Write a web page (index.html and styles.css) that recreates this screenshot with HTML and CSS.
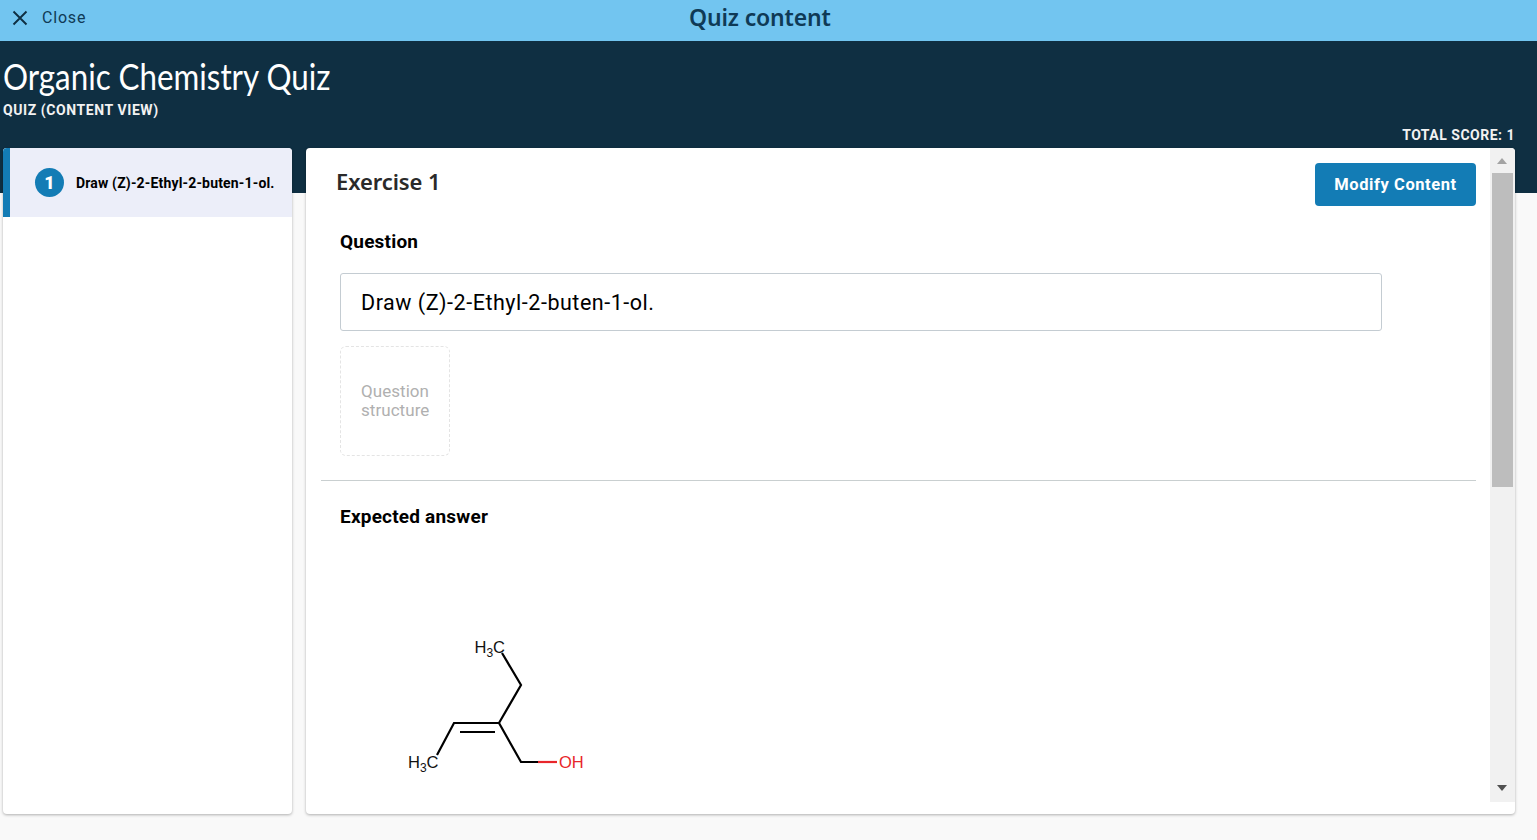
FILE: index.html
```html
<!DOCTYPE html>
<html lang="en">
<head>
<meta charset="utf-8">
<title>Quiz content</title>
<link rel="stylesheet" href="styles.css">
</head>
<body>
<header class="topbar">
  <a class="close">
    <svg class="close-icon" viewBox="0 0 16 16" width="16" height="16"><path d="M1.5 1.5 14.5 14.5M14.5 1.5 1.5 14.5" fill="none" stroke="#0f2f42" stroke-width="1.9"/></svg>
    <span>Close</span>
  </a>
  <div class="topbar-title">Quiz content</div>
</header>
<section class="hero">
  <h1>Organic Chemistry Quiz</h1>
  <div class="subtitle">QUIZ (CONTENT VIEW)</div>
  <div class="score">TOTAL SCORE: 1</div>
</section>
<div class="workspace">
  <aside class="sidebar">
    <div class="item">
      <span class="badge">1</span>
      <span class="item-text">Draw (Z)-2-Ethyl-2-buten-1-ol.</span>
    </div>
  </aside>
  <main class="panel">
    <div class="panel-body">
      <div class="panel-head">
        <h2>Exercise 1</h2>
        <button class="modify">Modify Content</button>
      </div>
      <div class="block">
        <h3>Question</h3>
        <div class="field">Draw (Z)-2-Ethyl-2-buten-1-ol.</div>
        <div class="dropbox">Question structure</div>
      </div>
      <hr class="divider">
      <div class="block">
        <h3 class="answer-title">Expected answer</h3>
        <svg class="molecule" width="280" height="250" viewBox="0 0 280 250">
          <g fill="none" stroke="#000" stroke-width="2.2">
            <path d="M162 113 181 145 159 183 114 183 97 215"/>
            <path d="M120 192H155"/>
            <path d="M159 183 181 222H198"/>
          </g>
          <path d="M198 222H217" fill="none" stroke="#e8262b" stroke-width="2.2"/>
          <text class="atom" x="134.500" y="112.500">H<tspan class="sub" dy="4">3</tspan><tspan dy="-4">C</tspan></text>
          <text class="atom" x="68" y="227.500">H<tspan class="sub" dy="4">3</tspan><tspan dy="-4">C</tspan></text>
          <text class="atom red" x="219" y="227.500">OH</text>
        </svg>
      </div>
    </div>
    <div class="scrollbar">
      <div class="arrow up"></div>
      <div class="track"><div class="thumb"></div></div>
      <div class="arrow down"></div>
    </div>
  </main>
</div>
</body>
</html>
```
FILE: styles.css
```css
* { box-sizing: border-box; }
html, body { margin: 0; height: 840px; overflow: hidden; }
body { background: #f9f9f9; font-family: Roboto, "Liberation Sans", sans-serif; color: #000; }

.topbar { height: 41px; background: #72c5f0; display: flex; align-items: flex-start; position: relative; }
.close { display: flex; align-items: center; gap: 14px; padding: 9px 0 0 12px; font-size: 16px; color: #0f3a56; letter-spacing: .8px; line-height: 17px; }
.close-icon { display: block; }
.topbar-title { position: absolute; left: 689px; top: 3px; font-family: "Noto Sans", sans-serif; font-size: 23px; line-height: 29px; font-weight: 600; color: #0f3a56; letter-spacing: -.15px; }

.hero { height: 152px; background: #0f2f42; color: #fff; padding: 14px 0 0 3px; position: relative; }
.hero h1 { margin: 0; font-family: Lato, sans-serif; font-weight: 400; font-size: 36px; line-height: 43px; transform: scaleX(.87); transform-origin: left center; white-space: nowrap; }
.subtitle { font-size: 14px; font-weight: 700; line-height: 16px; margin-top: 4px; color: #f2f2f2; letter-spacing: .58px; }
.score { position: absolute; right: 22px; top: 86px; font-size: 14px; font-weight: 700; line-height: 16px; color: #f2f2f2; letter-spacing: .5px; }

.workspace { display: flex; gap: 14px; padding: 0 22px 0 3px; margin-top: -45px; height: 666px; position: relative; }
.sidebar { width: 289px; background: #fff; border-radius: 4px; box-shadow: 0 1px 3px rgba(0,0,0,.3); overflow: hidden; }
.item { height: 69px; background: #eceef9; border-left: 7px solid #137cb5; display: flex; align-items: center; padding-left: 25px; }
.badge { width: 29px; height: 29px; border-radius: 50%; background: #137cb5; color: #fff; font-weight: 900; font-size: 18px; display: flex; align-items: center; justify-content: center; flex: none; }
.item-text { margin-left: 12px; font-size: 14px; font-weight: 700; letter-spacing: .17px; white-space: nowrap; }

.panel { flex: 1; background: #fff; border-radius: 4px; box-shadow: 0 1px 3px rgba(0,0,0,.3); display: flex; overflow: hidden; }
.panel-body { flex: 1; padding: 15px 14px 0 15px; min-width: 0; }
.panel-head { display: flex; justify-content: space-between; align-items: flex-start; height: 68px; }
.panel-head h2 { margin: 4px 0 0 15px; font-family: "Noto Sans", sans-serif; font-weight: 600; font-size: 22px; line-height: 28px; letter-spacing: -.1px; color: #2a2a2a; }
.modify { width: 161px; height: 43px; border: 0; border-radius: 4px; background: #137cb5; color: #fff; font-family: Roboto, sans-serif; font-weight: 700; font-size: 16.5px; letter-spacing: .58px; padding: 0; }
.block { padding-left: 19px; }
.block h3 { margin: 0; font-size: 19px; line-height: 22px; font-weight: 700; color: #000; letter-spacing: .2px; }
.field { width: 1042px; height: 58px; margin-top: 20px; border: 1px solid #c4ccd2; border-radius: 3px; padding: 0 20px; font-size: 21.5px; line-height: 57px; color: #000; letter-spacing: .53px; }
.dropbox { width: 110px; height: 110px; margin-top: 15px; border: 1px dashed #e4e4e4; border-radius: 6px; padding: 35px 20px 0; font-size: 17px; line-height: 19px; color: #b0b0b0; letter-spacing: .05px; }
.divider { border: 0; border-top: 1px solid #c9cfd0; margin: 24px 0 25px; }
.molecule { display: block; margin-top: 12px; }
.atom { font-family: "Liberation Sans", sans-serif; font-size: 16.5px; fill: #111; }
.sub { font-size: 12px; }
.red { fill: #e8262b; }

.scrollbar { width: 25px; height: 654px; background: #f1f1f1; padding-right: 2px; display: flex; flex-direction: column; flex: none; }
.arrow { height: 25px; flex: none; position: relative; }
.arrow::after { content: ""; position: absolute; left: 7px; border-left: 5px solid transparent; border-right: 5px solid transparent; }
.arrow.up::after { top: 10px; border-bottom: 6px solid #a3a3a3; }
.arrow.down::after { top: 8px; border-top: 6px solid #505050; }
.track { flex: 1; padding-left: 2px; }
.thumb { height: 314px; background: #bdbdbd; }
```
